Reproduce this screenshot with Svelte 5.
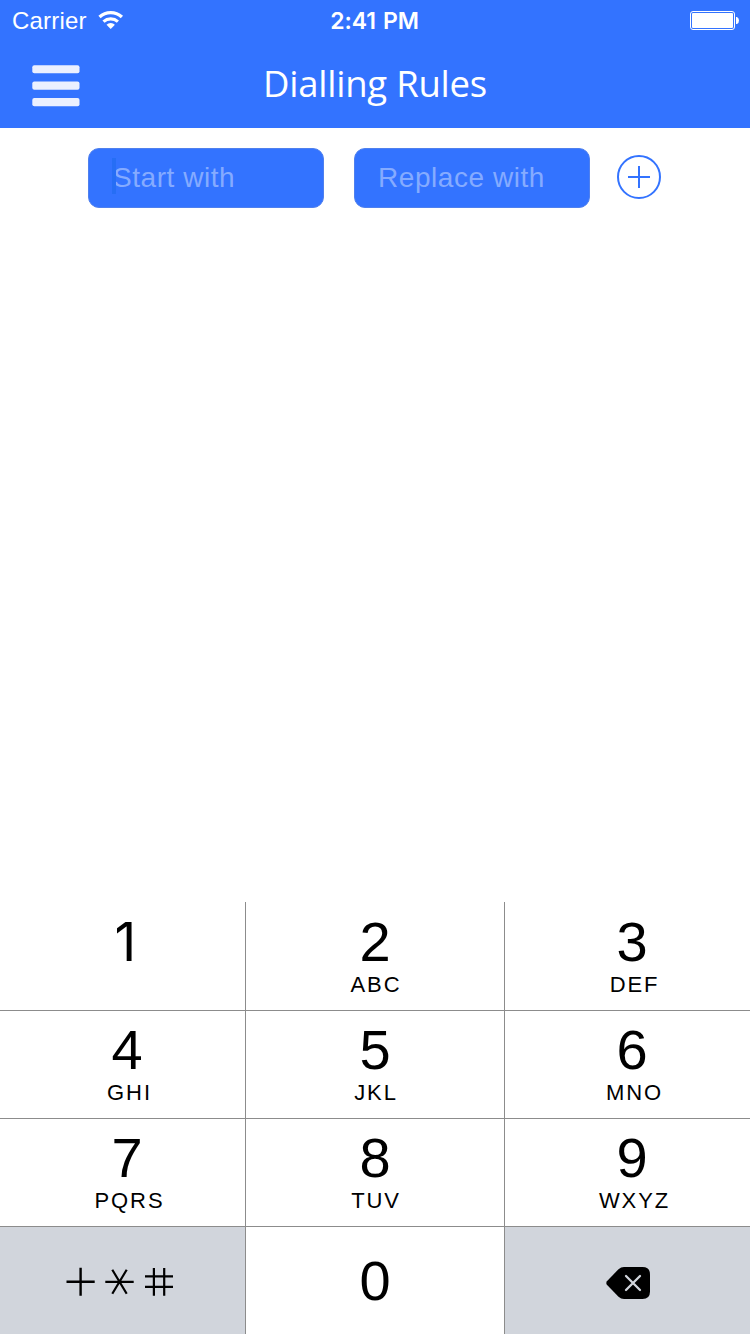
<script>
  const keys = [
    { digit: '1', letters: '' },
    { digit: '2', letters: 'ABC' },
    { digit: '3', letters: 'DEF' },
    { digit: '4', letters: 'GHI' },
    { digit: '5', letters: 'JKL' },
    { digit: '6', letters: 'MNO' },
    { digit: '7', letters: 'PQRS' },
    { digit: '8', letters: 'TUV' },
    { digit: '9', letters: 'WXYZ' }
  ];
</script>

<div class="screen">
  <header>
    <div class="status">
      <div class="carrier">
        <span>Carrier</span>
        <svg width="26" height="19" viewBox="0 0 26 19" fill="none" stroke="#fff">
          <path d="M1.5 7 A16.5 16.5 0 0 1 23.9 7" stroke-width="3.3" />
          <path d="M5.5 11.6 A10.9 10.9 0 0 1 19.9 11.6" stroke-width="3.2" />
          <path d="M8.5 14.7 A6 6 0 0 1 16.9 14.7 L12.7 19 Z" fill="#fff" stroke="none" />
        </svg>
      </div>
      <div class="time">2:41 PM</div>
      <svg class="battery" width="50" height="20" viewBox="0 0 50 20">
        <rect x="0.5" y="0.5" width="44" height="18" rx="2.5" fill="none" stroke="#fff" />
        <rect x="2" y="2" width="41" height="15" rx="1" fill="#fff" />
        <path d="M46 6 h1 q2 1 2 3.5 t-2 3.5 h-1z" fill="#fff" />
      </svg>
    </div>
    <div class="nav">
      <svg class="menu" width="48" height="42" viewBox="0 0 48 42" fill="#ebf0ff">
        <rect x="0.3" y="0.2" width="47.2" height="8" rx="2" />
        <rect x="0.3" y="16.6" width="47.2" height="8.2" rx="2" />
        <rect x="0.3" y="33.1" width="47.2" height="8.2" rx="2" />
      </svg>
      <h1>Dialling Rules</h1>
    </div>
  </header>

  <main>
    <div class="field start"><span>Start with</span><i class="caret"></i></div>
    <div class="field replace"><span>Replace with</span></div>
    <svg class="add" width="44" height="44" viewBox="0 0 44 44" fill="none" stroke="#3373ff" stroke-width="2">
      <circle cx="22" cy="22" r="21" />
      <path d="M11 22H33M22 11V33" />
    </svg>
  </main>

  <div class="keypad">
    {#each keys as key}
      <div class="key">
        <span class="digit" class:one={key.digit === '1'}>{key.digit}</span>
        <span class="letters">{key.letters}</span>
      </div>
    {/each}
    <div class="key gray">
      <svg class="symbols" width="108" height="30" viewBox="0 0 108 30" fill="none" stroke="#000" stroke-width="2">
        <path d="M0.5 14.8H28.7M14.6 0.8V28.8" stroke-width="2.4" />
        <path d="M39.3 14.8H67.7M46.3 2.8L60.7 26.8M60.7 2.8L46.3 26.8" stroke-width="2.2" />
        <path d="M79 9.4H107M79 19.8H107M87.9 1V28.8M98.2 1V28.8" stroke-width="2.2" />
      </svg>
    </div>
    <div class="key zero"><span class="digit">0</span></div>
    <div class="key gray">
      <svg class="delete" width="44" height="32" viewBox="0 0 44 32">
        <path d="M0.9 14.2 L12.5 2.2 Q15 0 18 0 H36.5 Q44 0 44 7.5 V24.5 Q44 32 36.5 32 H18 Q15 32 12.5 29.8 L0.9 17.8 Q-0.3 16 0.9 14.2Z" />
        <path d="M20 9L34 23M34 9L20 23" stroke="#d1d5dc" stroke-width="2.3" stroke-linecap="round" />
      </svg>
    </div>
  </div>
</div>

<style>
  :global(body) {
    margin: 0;
    background: #fff;
  }
  .screen {
    width: 750px;
    height: 1334px;
    display: flex;
    flex-direction: column;
    font-family: 'Liberation Sans', Arial, sans-serif;
    background: #fff;
    overflow: hidden;
  }
  svg {
    display: block;
    flex: none;
  }
  header {
    height: 128px;
    background: #3373ff;
    color: #fff;
  }
  .status {
    height: 40px;
    display: grid;
    grid-template-columns: 1fr auto 1fr;
    align-items: start;
    padding: 0 13px 0 12px;
    box-sizing: border-box;
  }
  .carrier {
    display: flex;
    gap: 11px;
    font-size: 24px;
    line-height: 41px;
    letter-spacing: 0.2px;
  }
  .carrier svg {
    margin-top: 10px;
  }
  .time {
    font: 600 23px/42px Inter, sans-serif;
    letter-spacing: -0.1px;
    word-spacing: 1.5px;
  }
  .battery {
    justify-self: end;
    margin: 11px -3px 0 0;
  }
  .nav {
    display: grid;
    grid-template-columns: 48px 1fr 48px;
    padding: 0 32px;
  }
  .menu {
    margin-top: 25px;
  }
  h1 {
    margin: 16px 0 0;
    text-align: center;
    font: 400 36.5px/54px 'Open Sans', sans-serif;
    letter-spacing: -0.25px;
    white-space: nowrap;
  }
  main {
    flex: 1;
    display: flex;
    align-items: flex-start;
    padding: 20px 0 0 88px;
  }
  .field {
    position: relative;
    width: 236px;
    height: 60px;
    box-sizing: border-box;
    border: 1px solid #4f80ee;
    border-radius: 11px;
    margin-right: 30px;
    padding-left: 23px;
    background: #3373ff;
    color: #85abff;
    font-size: 28px;
    line-height: 57px;
    letter-spacing: 0.55px;
    white-space: nowrap;
  }
  .start {
    padding-left: 24px;
  }
  .caret {
    position: absolute;
    left: 23px;
    top: 9px;
    width: 4px;
    height: 36px;
    background: #266ef5;
  }
  .replace {
    margin-right: 27px;
  }
  .add {
    margin-top: 7px;
  }
  .keypad {
    height: 432px;
    display: grid;
    grid-template-columns: 245px 258px 245px;
    grid-template-rows: 108px repeat(3, 107px);
    gap: 1px;
    background: #8c8c8c;
    color: #000;
  }
  .key {
    display: flex;
    flex-direction: column;
    align-items: center;
    box-sizing: border-box;
    padding-top: 12px;
    background: #fff;
  }
  .key:nth-child(-n + 3) {
    padding-top: 13px;
  }
  .key:nth-child(3n + 1),
  .key:nth-child(3n) {
    padding-left: 9px;
  }
  .digit {
    font-size: 56px;
    line-height: 54px;
  }
  .one {
    font-family: Inter, sans-serif;
    font-size: 53.5px;
    padding-right: 3px;
  }
  .letters {
    margin-top: 4px;
    padding-left: 2px;
    font-size: 22px;
    line-height: 24px;
    letter-spacing: 1.9px;
  }
  .key:nth-child(3n + 1) .letters,
  .key:nth-child(3n) .letters {
    padding-left: 5px;
  }
  .key.gray {
    background: #d1d5dc;
    padding: 0;
    align-items: flex-start;
  }
  .key.zero {
    padding-top: 27px;
  }
  .symbols {
    margin: 40px 0 0 66px;
  }
  .delete {
    margin: 40px 0 0 101px;
  }
</style>
